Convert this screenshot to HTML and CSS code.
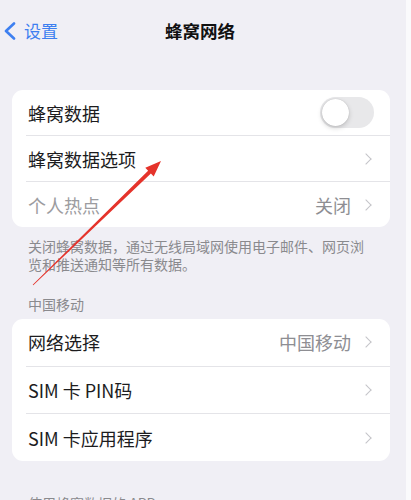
FILE: index.html
```html
<!DOCTYPE html>
<html lang="zh-CN">
<head>
<meta charset="utf-8">
<link rel="stylesheet" href="styles.css">
</head>
<body>
<div class="page">
  <div class="nav">
    <div class="back">
      <svg class="back-icon" width="14" height="18" viewBox="0 0 14 18"><path d="M11 1.5 L3 9 L11 16.5" fill="none" stroke="#3d7ff0" stroke-width="2.6" stroke-linecap="round" stroke-linejoin="round"/></svg>
      <span>设置</span>
    </div>
    <div class="title">蜂窝网络</div>
    <div></div>
  </div>

  <div class="card card-a">
    <div class="row">
      <span class="label">蜂窝数据</span>
      <span class="toggle"><span class="knob"></span></span>
    </div>
    <div class="row">
      <span class="label">蜂窝数据选项</span>
      <span class="chev"></span>
    </div>
    <div class="row">
      <span class="label dim">个人热点</span>
      <span class="value">关闭</span>
      <span class="chev"></span>
    </div>
  </div>
  <p class="note">关闭蜂窝数据，通过无线局域网使用电子邮件、网页浏览和推送通知等所有数据。</p>

  <div class="section">中国移动</div>
  <div class="card card-b">
    <div class="row">
      <span class="label">网络选择</span>
      <span class="value">中国移动</span>
      <span class="chev"></span>
    </div>
    <div class="row">
      <span class="label">SIM 卡 PIN码</span>
      <span class="chev"></span>
    </div>
    <div class="row">
      <span class="label">SIM 卡应用程序</span>
      <span class="chev"></span>
    </div>
  </div>
  <div class="section section-last">使用蜂窝数据的 APP</div>

  <svg class="arrow" width="406" height="500" viewBox="0 0 406 500">
    <polygon points="161,161 153.7,176.4 150.9,173.5 33.3,285.3 32.7,284.7 148.1,170.7 145.3,167.8" fill="#e5332b"/>
  </svg>
</div>
</body>
</html>
```

FILE: styles.css
```css
html, body {
  margin: 0;
  padding: 0;
}
body {
  background: #fafafc;
  font-family: "Noto Sans CJK SC", "Noto Sans", sans-serif;
  color: #1c1c1e;
  width: 411px;
  height: 500px;
  overflow: hidden;
}
.page {
  position: relative;
  width: 406px;
  height: 500px;
  background: #f0eff5;
  overflow: hidden;
}
.nav {
  height: 62px;
  display: grid;
  grid-template-columns: 1fr auto 1fr;
  align-items: center;
  padding-right: 6px;
}
.back {
  display: flex;
  align-items: center;
  gap: 7px;
  padding-left: 3px;
  color: #3d7ff0;
  font-size: 17px;
  line-height: 20px;
}
.back-icon {
  display: block;
}
.title {
  font-size: 17.5px;
  font-weight: 700;
  line-height: 20px;
  color: #111;
}
.card {
  margin: 28px 16px 0 12px;
  background: #fff;
  border-radius: 11px;
  overflow: hidden;
}
.card-b {
  margin-top: 6px;
}
.row {
  display: flex;
  align-items: center;
  padding: 0 18px 0 16px;
  height: 45px;
  position: relative;
}
.card-b .row {
  height: 46.7px;
}
.row + .row {
  border-top: 1px solid #e4e4e8;
  margin-left: 14px;
  padding-left: 2px;
}
.label {
  flex: 1;
  font-size: 18px;
  line-height: 22px;
  color: #1c1c1e;
}
.label.dim {
  color: #9c9ca0;
}
.value {
  font-size: 18px;
  line-height: 22px;
  color: #8e8e93;
  margin-right: 11px;
}
.chev {
  width: 7px;
  height: 7px;
  border-top: 1.6px solid #c4c4c8;
  border-right: 1.6px solid #c4c4c8;
  transform: rotate(45deg);
  margin-right: 2px;
}
.toggle {
  width: 54px;
  height: 31px;
  border-radius: 16px;
  background: #e8e8ea;
  position: relative;
  margin-right: -2px;
}
.knob {
  position: absolute;
  left: 2px;
  top: 2px;
  width: 27px;
  height: 27px;
  border-radius: 50%;
  background: #fff;
  box-shadow: 0 2px 5px rgba(0,0,0,0.18), 0 0 1px rgba(0,0,0,0.2);
}
.note {
  margin: 10px 0 0 28px;
  width: 340px;
  font-size: 14px;
  line-height: 18px;
  color: #8a8a8e;
}
.section {
  margin: 22px 0 0 28px;
  font-size: 14px;
  line-height: 18px;
  color: #8a8a8e;
}
.section-last {
  margin-top: 33px;
}
.arrow {
  position: absolute;
  left: 0;
  top: 0;
  pointer-events: none;
}
```
